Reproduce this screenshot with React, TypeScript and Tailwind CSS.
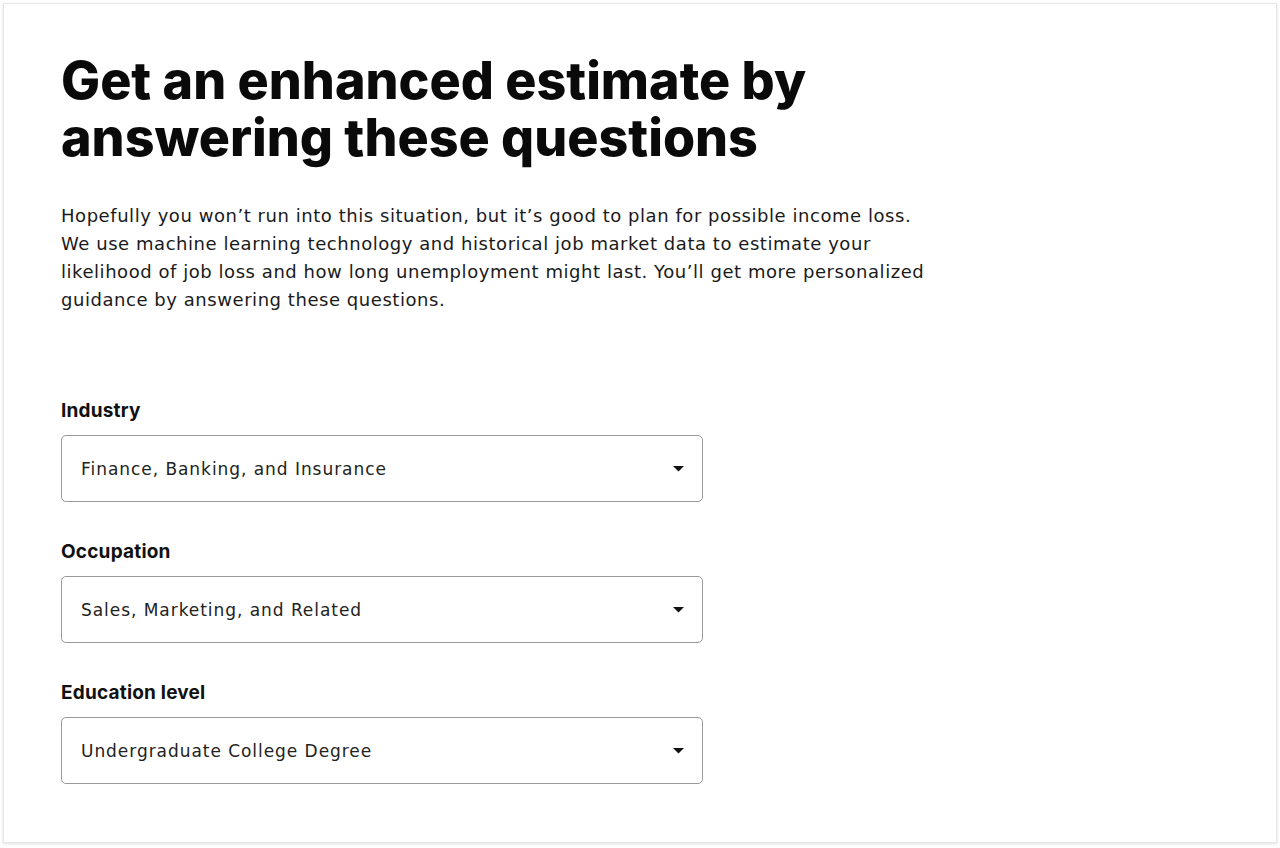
import React from "react";

function Caret() {
  return (
    <svg width="11" height="6" viewBox="0 0 11 6" className="shrink-0">
      <path d="M0 0 H11 L5.5 5.5 Z" fill="#111" />
    </svg>
  );
}

function Select({ label, value }: { label: string; value: string }) {
  return (
    <div className="flex flex-col">
      <div
        className="text-[19px] font-bold leading-[24px] text-[#111] tracking-[0.2px]"
        style={{ fontFamily: "Inter, sans-serif" }}
      >
        {label}
      </div>
      <div className="mt-[12px] w-[642px] h-[67px] rounded-[5px] border border-[#9a9a9a] flex items-center justify-between pl-[19px] pr-[18px]">
        <span
          className="text-[17px] tracking-[0.95px] text-[#222] pt-[3px]"
          style={{ fontFamily: "'DejaVu Sans', sans-serif" }}
        >
          {value}
        </span>
        <Caret />
      </div>
    </div>
  );
}

export default function App() {
  return (
    <div className="w-[1280px] h-[848px] bg-white p-[3px] pb-[5px]">
      <div className="h-full w-[1274px] bg-white border border-[#e6e6e6] shadow-[0_1px_3px_rgba(0,0,0,0.12)] pl-[57px] pt-[48px]">
        <h1
          className="text-[52px] leading-[57px] font-extrabold text-[#0a0a0a]"
          style={{ fontFamily: "Inter, sans-serif" }}
        >
          Get an enhanced estimate by
          <br />
          answering these questions
        </h1>
        <p
          className="mt-[36px] text-[18px] leading-[28px] text-[#1a1a1a] tracking-[0.55px] whitespace-nowrap"
          style={{ fontFamily: "'DejaVu Sans', sans-serif" }}
        >
          Hopefully you won’t run into this situation, but it’s good to plan for possible income loss.
          <br />
          We use machine learning technology and historical job market data to estimate your
          <br />
          likelihood of job loss and how long unemployment might last. You’ll get more personalized
          <br />
          guidance by answering these questions.
        </p>
        <div className="mt-[85px] flex flex-col gap-[38px]">
          <Select label="Industry" value="Finance, Banking, and Insurance" />
          <Select label="Occupation" value="Sales, Marketing, and Related" />
          <Select label="Education level" value="Undergraduate College Degree" />
        </div>
      </div>
    </div>
  );
}
